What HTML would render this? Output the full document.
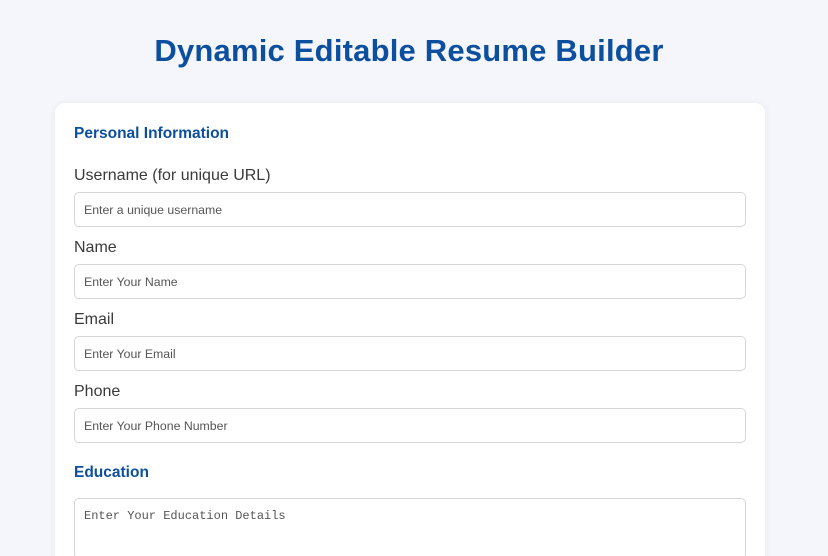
<!DOCTYPE html>
<html><head><meta charset="utf-8"><style>
html,body{margin:0;padding:0;width:828px;height:556px;overflow:hidden;}
body{background:#f4f6fb;font-family:"Liberation Sans",sans-serif;position:relative;}
h1{position:absolute;top:33px;left:0;width:818px;text-align:center;margin:0;font-size:31px;font-weight:bold;color:#0d4f9f;letter-spacing:0.2px;}
.card{position:absolute;left:55px;top:103px;width:710px;height:470px;background:#fff;border-radius:10px;box-shadow:0 0 8px rgba(0,0,0,0.06);}
.h{position:absolute;left:74px;font-size:15.5px;font-weight:bold;color:#0d4f9f;}
.l{position:absolute;left:74px;font-size:16px;color:#3a3a3a;}
.i{position:absolute;left:74px;width:670px;height:33px;border:1px solid #d6d6d6;border-radius:5px;box-sizing:content-box;}
.i span{position:absolute;left:9px;top:10px;font-size:12.3px;color:#555;font-family:"Liberation Sans",sans-serif;}
.t span{font-family:"Liberation Mono",monospace;font-size:12px;color:#555;top:10px;}
</style></head><body>
<h1>Dynamic Editable Resume Builder</h1>
<div class="card"></div>
<div class="h" style="top:125px">Personal Information</div>
<div class="l" style="top:167px">Username (for unique URL)</div>
<div class="i" style="top:192px"><span>Enter a unique username</span></div>
<div class="l" style="top:239px">Name</div>
<div class="i" style="top:264px"><span>Enter Your Name</span></div>
<div class="l" style="top:311px">Email</div>
<div class="i" style="top:336px"><span>Enter Your Email</span></div>
<div class="l" style="top:383px">Phone</div>
<div class="i" style="top:408px"><span>Enter Your Phone Number</span></div>
<div class="h" style="top:464px">Education</div>
<div class="i t" style="top:498px;height:60px"><span>Enter Your Education Details</span></div>
</body></html>
